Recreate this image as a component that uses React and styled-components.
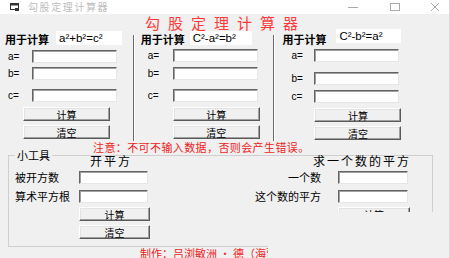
import React from "react";
import styled, { createGlobalStyle } from "styled-components";

const cols = [
  {
    formula: "a²+b²=c²",
    textX: 5,
    boxGap: 7,
    boxW: 66,
    boxShift: 0,
    labelX: 8,
    inputX: 32,
    gaps: [5, 4, 9],
    labels: ["a=", "b=", "c="],
    width: 133,
  },
  {
    formula: "C²-a²=b²",
    textX: 6,
    boxGap: 5,
    boxW: 62,
    boxShift: 0,
    labelX: 13,
    inputX: 38,
    gaps: [4, 5, 9],
    labels: ["a=", "b=", "c="],
    width: 139,
  },
  {
    formula: "C²-b²=a²",
    textX: 7,
    boxGap: 10,
    boxW: 65,
    boxShift: -2,
    labelX: 16,
    inputX: 39,
    gaps: [4, 10, 5],
    labels: ["a=", "b=", "c="],
    width: 174,
  },
];

const App = () => {
  return (
    <Window>
      <GlobalStyle />
      <TitleBar>
        <AppIcon width="9" height="8" viewBox="0 0 9 8">
          <rect x="0.5" y="0.5" width="8" height="6" fill="none" stroke="#333" />
          <rect x="0.5" y="0.5" width="8" height="2" fill="#333" />
          <rect x="5" y="5" width="4" height="3" fill="#333" />
        </AppIcon>
        <TitleText>勾股定理计算器</TitleText>
        <Controls>
          <svg width="10" height="10" viewBox="0 0 10 10">
            <line x1="0" y1="5.5" x2="10" y2="5.5" stroke="#aaa" />
          </svg>
          <svg width="10" height="10" viewBox="0 0 10 10">
            <rect x="0.5" y="1.5" width="9" height="7" fill="none" stroke="#aaa" />
          </svg>
          <svg width="10" height="10" viewBox="0 0 10 10">
            <path d="M1 1 L9 9 M9 1 L1 9" stroke="#aaa" />
          </svg>
        </Controls>
      </TitleBar>

      <Heading>勾股定理计算器</Heading>

      <Calculators>
        {cols.map((c, i) => (
          <React.Fragment key={c.formula}>
            {i > 0 && <Separator />}
            <Column $w={c.width}>
              <ColHeader>
                <ColTitle $x={c.textX}>用于计算</ColTitle>
                <Formula $gap={c.boxGap} $w={c.boxW} $shift={c.boxShift}>
                  {c.formula}
                </Formula>
              </ColHeader>
              {c.labels.map((l, j) => (
                <Field key={l} $gap={c.gaps[j]}>
                  <VarLabel $x={c.labelX} $w={c.inputX}>
                    {l}
                  </VarLabel>
                  <Input $w={85} />
                </Field>
              ))}
              <Button $x={i === 0 ? 23 : c.inputX} $w={87} $gap={5}>
                计算
              </Button>
              <Button $x={i === 0 ? 23 : c.inputX} $w={87} $gap={4}>
                清空
              </Button>
            </Column>
          </React.Fragment>
        ))}
      </Calculators>

      <Warning>注意：不可不输入数据，否则会产生错误。</Warning>

      <GroupBox>
        <Caption>小工具</Caption>
        <Pane $w={236}>
          <ToolTitle $x={81}>开平方</ToolTitle>
          <ToolRow $gap={4}>
            <ToolLabel $w={70} $pl={6}>
              被开方数
            </ToolLabel>
            <Input $w={69} />
          </ToolRow>
          <ToolRow $gap={6}>
            <ToolLabel $w={70} $pl={6}>
              算术平方根
            </ToolLabel>
            <Input $w={69} />
          </ToolRow>
          <Button $x={70} $w={71} $gap={4}>
            计算
          </Button>
          <Button $x={70} $w={71} $gap={4}>
            清空
          </Button>
        </Pane>
        <Pane $w={186}>
          <ToolTitle $x={68}>求一个数的平方</ToolTitle>
          <ToolRow $gap={4}>
            <ToolLabel $w={80} $right>
              一个数
            </ToolLabel>
            <Input $w={70} $ml={13} />
          </ToolRow>
          <ToolRow $gap={6}>
            <ToolLabel $w={80} $right>
              这个数的平方
            </ToolLabel>
            <Input $w={70} $ml={13} />
          </ToolRow>
          <Button $x={93} $w={72} $gap={4}>
            计算
          </Button>
        </Pane>
      </GroupBox>
      <Cover />

      <Footer>制作：吕浏敏洲 · 德（海贾）</Footer>
    </Window>
  );
};

// Styled Components
const GlobalStyle = createGlobalStyle`
  html, body {
    margin: 0;
    padding: 0;
    width: 450px;
    height: 258px;
    overflow: hidden;
    background: #f0f0f0;
  }
  * {
    box-sizing: border-box;
  }
`;

const Window = styled.div`
  position: relative;
  width: 450px;
  height: 258px;
  overflow: hidden;
  background: #f0f0f0;
  font-family: "Noto Sans CJK SC", "Liberation Sans", sans-serif;
  color: #000;
  border-right: 1px solid #d8d8d8;
`;

const TitleBar = styled.div`
  height: 14px;
  background: #fff;
  display: flex;
  align-items: center;
  padding-left: 10px;
`;

const AppIcon = styled.svg`
  display: block;
`;

const TitleText = styled.span`
  margin-left: 9px;
  font-size: 10px;
  line-height: 14px;
  letter-spacing: 1.6px;
  color: #bdbdbd;
`;

const Controls = styled.div`
  margin-left: auto;
  display: flex;
  align-items: center;
  gap: 30px;
  padding-right: 9px;

  svg {
    display: block;
  }
  svg:first-child {
    margin-right: 2px;
  }
`;

const Heading = styled.div`
  height: 17px;
  padding-left: 145px;
  font-size: 15px;
  line-height: 17px;
  letter-spacing: 8px;
  color: #ff3a3a;
  white-space: nowrap;
`;

const Calculators = styled.div`
  display: flex;
  height: 110px;
`;

const Separator = styled.div`
  width: 2px;
  margin-top: 4px;
  background: #6a6a6a;
  border-right: 1px solid #fff;
`;

const Column = styled.div`
  width: ${(p) => p.$w}px;
  display: flex;
  flex-direction: column;
`;

const ColHeader = styled.div`
  height: 14px;
  display: flex;
  align-items: center;
`;

const ColTitle = styled.span`
  margin-left: ${(p) => p.$x}px;
  font-size: 11px;
  font-weight: 600;
  line-height: 14px;
  margin-top: 2px;
  white-space: nowrap;
`;

const Formula = styled.span`
  margin-left: ${(p) => p.$gap}px;
  width: ${(p) => p.$w}px;
  height: 14px;
  margin-top: ${(p) => p.$shift * 2}px;
  background: #fff;
  font-family: "Liberation Sans", Arial, sans-serif;
  font-size: 11.5px;
  line-height: 14px;
  padding-left: 3px;
  white-space: nowrap;
`;

const Field = styled.div`
  display: flex;
  align-items: center;
  height: 13px;
  margin-top: ${(p) => p.$gap}px;
`;

const VarLabel = styled.span`
  width: ${(p) => p.$w}px;
  padding-left: ${(p) => p.$x}px;
  font-family: "Liberation Sans", Arial, sans-serif;
  font-size: 10px;
  line-height: 13px;
`;

const Input = styled.input`
  width: ${(p) => p.$w}px;
  height: 13px;
  margin: 0 0 0 ${(p) => p.$ml || 0}px;
  padding: 0;
  background: #fff;
  border: 1px solid;
  border-color: #646464 #e6e6e6 #e6e6e6 #646464;
  box-shadow: inset 1px 1px 0 #a0a0a0;
  outline: none;
`;

const Button = styled.button`
  display: block;
  width: ${(p) => p.$w}px;
  height: 14px;
  margin: ${(p) => p.$gap}px 0 0 ${(p) => p.$x}px;
  padding: 0;
  background: #f0f0f0;
  border: 1px solid;
  border-color: #fff #5a5a5a #5a5a5a #fff;
  box-shadow: inset -1px -1px 0 #a0a0a0, inset 1px 1px 0 #e3e3e3;
  font-family: "Noto Sans CJK SC", sans-serif;
  font-size: 10px;
  line-height: 11px;
  color: #000;
`;

const Warning = styled.div`
  height: 12px;
  padding-left: 93px;
  font-size: 11px;
  line-height: 12px;
  letter-spacing: 0.4px;
  color: #ee2222;
  white-space: nowrap;
`;

const GroupBox = styled.div`
  position: relative;
  display: flex;
  width: 425px;
  height: 92px;
  margin: 2px 0 0 8px;
  border: 1px solid #cfcfcf;
`;

const Caption = styled.span`
  position: absolute;
  top: -7px;
  left: 6px;
  padding: 0 2px;
  background: #f0f0f0;
  font-size: 11px;
  line-height: 12px;
`;

const Pane = styled.div`
  width: ${(p) => p.$w}px;
  display: flex;
  flex-direction: column;
`;

const ToolTitle = styled.div`
  height: 12px;
  margin-top: -1px;
  padding-left: ${(p) => p.$x}px;
  font-size: 12px;
  line-height: 12px;
  letter-spacing: 2px;
  white-space: nowrap;
`;

const ToolRow = styled.div`
  display: flex;
  align-items: center;
  height: 13px;
  margin-top: ${(p) => p.$gap}px;
`;

const ToolLabel = styled.span`
  width: ${(p) => p.$w}px;
  padding-left: ${(p) => p.$pl || 0}px;
  padding-right: ${(p) => (p.$right ? 4 : 0)}px;
  text-align: ${(p) => (p.$right ? "right" : "left")};
  font-size: 11px;
  line-height: 13px;
  white-space: nowrap;
`;

const Cover = styled.div`
  position: absolute;
  left: 268px;
  top: 212px;
  width: 176px;
  height: 46px;
  background: #f0f0f0;
`;

const Footer = styled.div`
  height: 12px;
  padding-left: 140px;
  font-size: 11px;
  line-height: 12px;
  color: #ee2222;
  white-space: nowrap;
`;

export default App;
